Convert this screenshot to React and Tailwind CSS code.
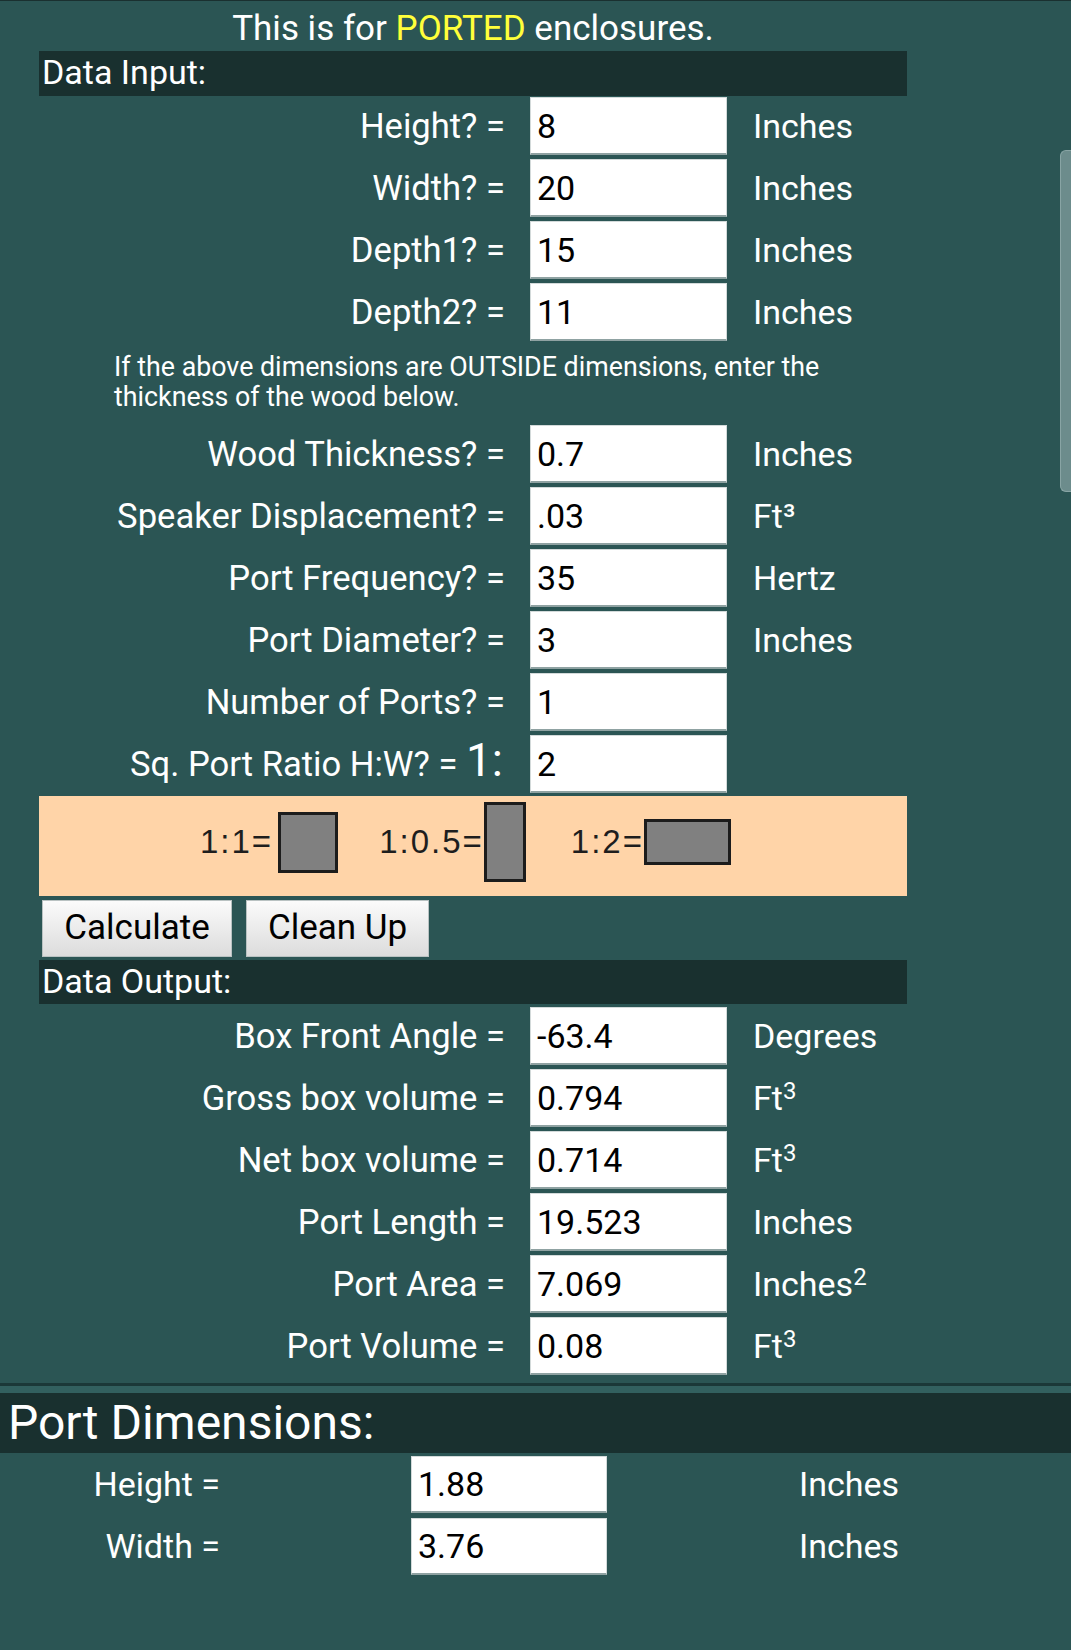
import React from "react";

const inputsTop = [
  { label: "Height? =", value: "8", unit: "Inches" },
  { label: "Width? =", value: "20", unit: "Inches" },
  { label: "Depth1? =", value: "15", unit: "Inches" },
  { label: "Depth2? =", value: "11", unit: "Inches" },
];

const inputsBottom = [
  { label: "Wood Thickness? =", value: "0.7", unit: "Inches" },
  { label: "Speaker Displacement? =", value: ".03", unit: "Ft³" },
  { label: "Port Frequency? =", value: "35", unit: "Hertz" },
  { label: "Port Diameter? =", value: "3", unit: "Inches" },
  { label: "Number of Ports? =", value: "1", unit: "" },
];

const outputs = [
  { label: "Box Front Angle =", value: "-63.4", unit: "Degrees" },
  { label: "Gross box volume =", value: "0.794", unit: "Ft", sup: "3" },
  { label: "Net box volume =", value: "0.714", unit: "Ft", sup: "3" },
  { label: "Port Length =", value: "19.523", unit: "Inches" },
  { label: "Port Area =", value: "7.069", unit: "Inches", sup: "2" },
  { label: "Port Volume =", value: "0.08", unit: "Ft", sup: "3" },
];

const Field = ({ value, className = "" }) => (
  <div
    className={`h-[58px] bg-white border border-[#d3dada] border-b-2 border-b-[#8fa2a2] flex items-center pl-[6px] text-[34px] text-black ${className}`}
  >
    {value}
  </div>
);

const Row = ({ label, value, unit, sup }) => (
  <div className="grid grid-cols-[491px_197px_1fr] items-center h-[58px] leading-[58px]">
    <div className="text-right pr-[25px] whitespace-nowrap text-[34.6px]">{label}</div>
    <Field value={value} />
    <div className="pl-[26px] whitespace-nowrap">
      {unit}
      {sup && <sup className="text-[24px] relative -top-[11px]">{sup}</sup>}
    </div>
  </div>
);

const Swatch = ({ w, h }) => (
  <div
    className="bg-[#808080] border-[3px] border-[#1c1c1c]"
    style={{ width: w, height: h }}
  />
);

export default function App() {
  return (
    <div
      className="relative min-h-[1650px] bg-[#2b5554] border-t border-[#1a3030] text-white text-[34px] overflow-hidden"
      style={{ fontFamily: "Roboto, 'Noto Sans', sans-serif" }}
    >
      {/* scroll indicator */}
      <div className="absolute right-0 top-[149px] h-[342px] w-[11px] rounded-l-[6px] bg-[#6c8c8c] border border-r-0 border-[#88a4a4]" />

      <div className="ml-[39px] w-[868px]">
        <div className="h-[50px] pt-[7px] text-center text-[35px] leading-[41px]">
          This is for <span className="text-[#ffff3a]">PORTED</span> enclosures.
        </div>

        <div className="h-[45px] bg-[#19302f] pl-[3px] text-[34px] leading-[43px]">
          Data Input:
        </div>

        <div className="mt-[1px] flex flex-col gap-[4px]">
          {inputsTop.map((r) => (
            <Row key={r.label} {...r} />
          ))}
        </div>

        <p className="ml-[75px] w-[780px] mt-[11px] mb-[13px] text-[26.8px] leading-[30px]">
          If the above dimensions are OUTSIDE dimensions, enter the thickness of the wood below.
        </p>

        <div className="flex flex-col gap-[4px]">
          {inputsBottom.map((r) => (
            <Row key={r.label} {...r} />
          ))}
          <div className="grid grid-cols-[491px_197px_1fr] items-center h-[58px] leading-[58px]">
            <div className="text-right pr-[27px] whitespace-nowrap text-[34.6px]">
              Sq. Port Ratio H:W? = <span className="text-[46px] leading-none">1:</span>
            </div>
            <Field value="2" />
            <div />
          </div>
        </div>

        <div
          className="mt-[3px] h-[100px] bg-[#ffd4a8] flex items-center pb-[8px] pl-[161px] text-[#1e1e1e] text-[33px] tracking-[2px]"
          style={{ fontFamily: "'Liberation Sans', Arial, sans-serif" }}
        >
          <span>1:1=</span>
          <div className="ml-[5px]">
            <Swatch w={60} h={61} />
          </div>
          <span className="ml-[41px]">1:0.5=</span>
          <div>
            <Swatch w={42} h={80} />
          </div>
          <span className="ml-[45px]">1:2=</span>
          <div>
            <Swatch w={87} h={46} />
          </div>
        </div>

        <div className="mt-[4px] h-[57px] flex gap-[14px] pl-[3px]">
          <button className="w-[190px] h-[57px] bg-gradient-to-b from-[#fbfbfb] to-[#dcdcdc] border border-[#b9c2c2] text-black text-[35px]">
            Calculate
          </button>
          <button className="w-[183px] h-[57px] bg-gradient-to-b from-[#fbfbfb] to-[#dcdcdc] border border-[#b9c2c2] text-black text-[35px]">
            Clean Up
          </button>
        </div>

        <div className="mt-[3px] h-[44px] bg-[#19302f] pl-[3px] text-[34px] leading-[42px]">
          Data Output:
        </div>

        <div className="mt-[3px] flex flex-col gap-[4px]">
          {outputs.map((r) => (
            <Row key={r.label} {...r} />
          ))}
        </div>
      </div>

      {/* PORT DIMENSIONS */}
      <div className="mt-[8px] border-t-[3px] border-[#1b3838]">
        <div className="h-[7px] bg-[#32605f]" />
        <div className="h-[60px] bg-[#19302f] pl-[8px] text-[48px] leading-[60px]">
          Port Dimensions:
        </div>
        <div className="mt-[3px] flex flex-col gap-[5px]">
          {[
            { label: "Height =", value: "1.88" },
            { label: "Width =", value: "3.76" },
          ].map((r) => (
            <div key={r.label} className="flex items-center h-[57px]">
              <div className="w-[220px] text-right whitespace-nowrap">{r.label}</div>
              <Field value={r.value} className="ml-[191px] w-[196px] !h-[57px]" />
              <div className="ml-[192px]">Inches</div>
            </div>
          ))}
        </div>
      </div>
    </div>
  );
}
